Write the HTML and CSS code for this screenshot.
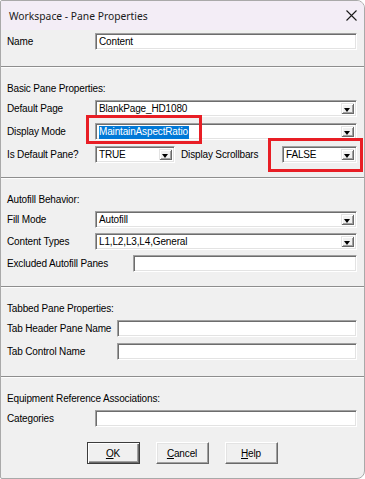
FILE: index.html
```html
<!DOCTYPE html>
<html lang="en">
<head>
  <meta charset="UTF-8">
  <title>Workspace - Pane Properties</title>
  <link rel="stylesheet" href="styles.css">
</head>
<body>
  <div class="window">
    <!-- Barra de titulo -->
    <div class="titlebar">
      <span class="title">Workspace - Pane Properties</span>
      <svg class="close" width="11" height="11" viewBox="0 0 11 11">
        <path d="M0.5 0.5 L10.5 10.5 M10.5 0.5 L0.5 10.5" stroke="#1a1a1a" stroke-width="1.1" fill="none"/>
      </svg>
    </div>

    <div class="section section-name">
      <div class="row">
        <span class="lbl">Name</span>
        <div class="field">Content</div>
      </div>
    </div>

    <div class="section">
      <div class="heading">Basic Pane Properties:</div>
      <div class="rows">
        <div class="row">
          <span class="lbl">Default Page</span>
          <div class="combo"><span class="val">BlankPage_HD1080</span><span class="drop"></span></div>
        </div>
        <div class="row">
          <span class="lbl">Display Mode</span>
          <div class="combo"><span class="val"><span class="sel">MaintainAspectRatio</span></span><span class="drop"></span></div>
        </div>
        <div class="row">
          <span class="lbl">Is Default Pane?</span>
          <div class="combo combo-small"><span class="val">TRUE</span><span class="drop"></span></div>
          <span class="lbl-mid">Display Scrollbars</span>
          <div class="combo combo-bool"><span class="val">FALSE</span><span class="drop"></span></div>
        </div>
      </div>
    </div>

    <div class="section section-autofill">
      <div class="heading">Autofill Behavior:</div>
      <div class="rows">
        <div class="row">
          <span class="lbl">Fill Mode</span>
          <div class="combo"><span class="val">Autofill</span><span class="drop"></span></div>
        </div>
        <div class="row">
          <span class="lbl">Content Types</span>
          <div class="combo"><span class="val">L1,L2,L3,L4,General</span><span class="drop"></span></div>
        </div>
        <div class="row">
          <span class="lbl lbl-wide">Excluded Autofill Panes</span>
          <div class="field"></div>
        </div>
      </div>
    </div>

    <div class="section section-tabbed">
      <div class="heading">Tabbed Pane Properties:</div>
      <div class="rows">
        <div class="row">
          <span class="lbl lbl-tab">Tab Header Pane Name</span>
          <div class="field"></div>
        </div>
        <div class="row">
          <span class="lbl lbl-tab">Tab Control Name</span>
          <div class="field"></div>
        </div>
      </div>
    </div>

    <div class="section section-last">
      <div class="heading">Equipment Reference Associations:</div>
      <div class="rows">
        <div class="row">
          <span class="lbl">Categories</span>
          <div class="field"></div>
        </div>
      </div>
      <div class="buttons">
        <button class="btn btn-default"><u>O</u>K</button>
        <button class="btn"><u>C</u>ancel</button>
        <button class="btn"><u>H</u>elp</button>
      </div>
    </div>

    <!-- Marcacoes vermelhas -->
    <div class="mark mark-mode"></div>
    <div class="mark mark-scroll"></div>
  </div>
</body>
</html>
```

FILE: styles.css
```css
* {
  margin: 0;
  padding: 0;
  box-sizing: border-box;
}

body {
  font-family: 'Liberation Sans', Arial, sans-serif;
  font-size: 10px;
  letter-spacing: -0.15px;
  color: #000;
  background-color: #fff;
}

.window {
  position: relative;
  width: 365px;
  height: 479px;
  display: flex;
  flex-direction: column;
  background-color: #f0f0f0;
  border: 1px solid #a9a9a9;
  border-radius: 2px 8px 8px 2px;
  overflow: hidden;
}

.titlebar {
  height: 29px;
  flex-shrink: 0;
  display: flex;
  align-items: center;
  justify-content: space-between;
  padding: 0 7px 0 8px;
  background-color: #f3edf6;
}

.title {
  font-family: 'Noto Sans', sans-serif;
  font-size: 10.3px;
  letter-spacing: 0;
  color: #1a1a1a;
}

.close {
  margin-top: -1px;
}

.section {
  border-top: 1px solid #8e8e8e;
  box-shadow: inset 0 1px 0 #fdfdfd;
  padding: 15px 7px 14px 6px;
}

.section-name {
  border-top: none;
  box-shadow: none;
  padding: 3px 7px 16px 6px;
}

.section-tabbed {
  padding-top: 15px;
  padding-bottom: 16px;
}

.section-last {
  flex: 1;
  padding-bottom: 0;
}

.heading {
  height: 13px;
  line-height: 13px;
  margin-bottom: 5px;
}

.rows {
  display: flex;
  flex-direction: column;
  gap: 6px;
}

.section-autofill .rows {
  gap: 5px;
}

.row {
  display: flex;
  align-items: center;
  height: 17px;
}

.lbl {
  width: 88px;
  flex-shrink: 0;
}

.lbl-wide {
  width: 126px;
}

.lbl-tab {
  width: 110px;
}

.lbl-mid {
  flex: 1;
  padding-left: 6px;
}

.field,
.combo {
  flex: 1;
  height: 17px;
  background-color: #fff;
  border: 1px solid;
  border-color: #a0a0a0 #fff #fff #a0a0a0;
  box-shadow: inset 1px 1px 0 #6d6d6d, inset -1px -1px 0 #e3e3e3;
  padding: 1px 2px 0 3px;
  line-height: 14px;
  white-space: nowrap;
}

.combo {
  display: flex;
  align-items: stretch;
  padding: 2px 2px 2px 3px;
}

.combo-small {
  flex: none;
  width: 80px;
}

.combo-bool {
  flex: none;
  width: 75px;
}

.val {
  flex: 1;
  line-height: 12px;
}

.sel {
  display: inline-block;
  height: 13px;
  background-color: #0078d7;
  color: #fff;
  padding: 0 1px 0 0;
}

.drop {
  position: relative;
  width: 13px;
  flex-shrink: 0;
  background-color: #f0f0f0;
  box-shadow: inset 1px 1px 0 #e3e3e3, inset -1px -1px 0 #696969, inset 2px 2px 0 #fff, inset -2px -2px 0 #a0a0a0;
}

.drop::after {
  content: "";
  position: absolute;
  left: 3px;
  top: 5px;
  border-left: 3.5px solid transparent;
  border-right: 3.5px solid transparent;
  border-top: 4px solid #000;
}

.buttons {
  display: flex;
  justify-content: center;
  gap: 16px;
  margin-top: 15px;
}

.btn {
  width: 53px;
  height: 22px;
  font-family: 'Liberation Sans', Arial, sans-serif;
  font-size: 10px;
  letter-spacing: -0.15px;
  color: #000;
  background-color: #f0f0f0;
  border: 1px solid;
  border-color: #fff #696969 #696969 #fff;
  box-shadow: inset -1px -1px 0 #a0a0a0, inset 1px 1px 0 #e3e3e3;
}

.btn-default {
  border: 1px solid #3c3c3c;
  box-shadow: inset 1px 1px 0 #fff, inset -1px -1px 0 #696969, inset -2px -2px 0 #a0a0a0;
}

.mark {
  position: absolute;
  border: 3px solid #e81e25;
}

.mark-mode {
  left: 85px;
  top: 114px;
  width: 116px;
  height: 29px;
}

.mark-scroll {
  left: 267px;
  top: 137px;
  width: 95px;
  height: 34px;
}
```
